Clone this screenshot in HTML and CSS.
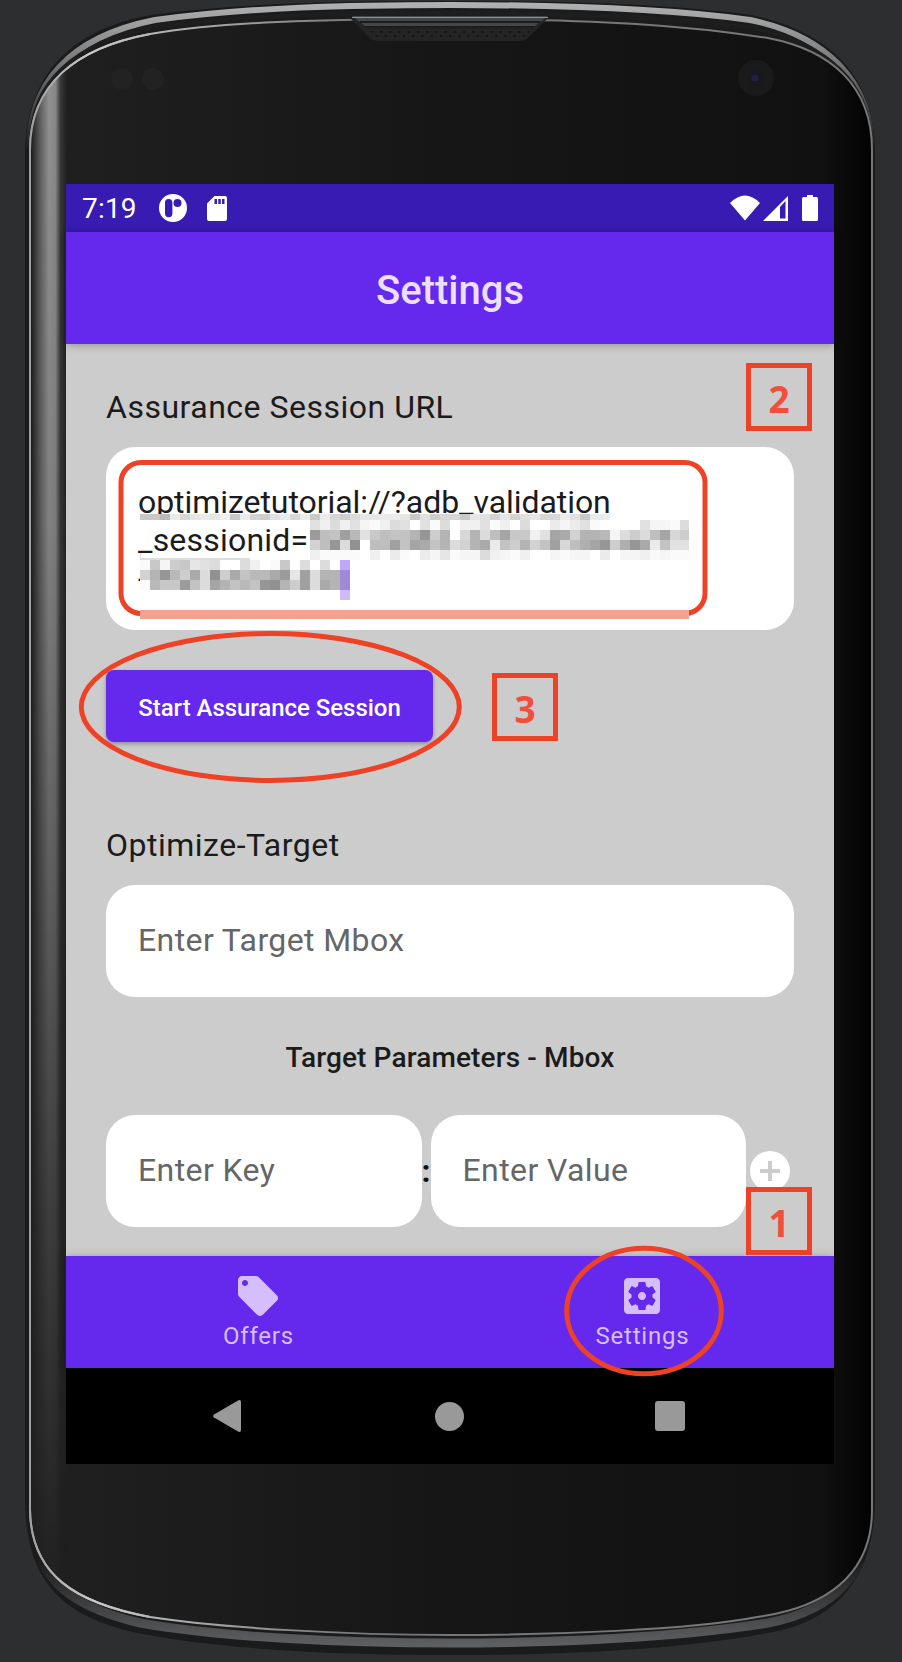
FILE: index.html
```html
<!DOCTYPE html>
<html lang="en">
<head>
<meta charset="utf-8">
<title>Settings</title>
<link rel="stylesheet" href="styles.css">
</head>
<body>
<div class="stage">
  <svg class="frame" width="902" height="1662" viewBox="0 0 902 1662">
    <defs>
      <linearGradient id="face" x1="0" x2="1" y1="0" y2="0">
        <stop offset="0" stop-color="#202020"/><stop offset=".5" stop-color="#161616"/>
        <stop offset=".94" stop-color="#111"/><stop offset="1" stop-color="#020202"/>
      </linearGradient>
      <linearGradient id="glare" x1="0" x2="1" y1="0" y2="0">
        <stop offset="0" stop-color="#1c1c1c"/><stop offset=".25" stop-color="#5e5e5e"/><stop offset=".5" stop-color="#929292"/>
        <stop offset=".68" stop-color="#888"/><stop offset=".82" stop-color="#383838"/><stop offset="1" stop-color="#202020"/>
      </linearGradient>
      <linearGradient id="fade" x1="0" x2="0" y1="0" y2="1">
        <stop offset="0" stop-color="#fff"/><stop offset=".3" stop-color="#ddd"/><stop offset=".75" stop-color="#444"/>
        <stop offset="1" stop-color="#000"/>
      </linearGradient>
      <linearGradient id="rim" gradientUnits="userSpaceOnUse" x1="0" x2="0" y1="0" y2="150">
        <stop offset="0" stop-color="#b4b4b4"/><stop offset=".3" stop-color="#8a8a8a"/><stop offset="1" stop-color="#1b1b1b"/>
      </linearGradient>
      <linearGradient id="rimBottom" gradientUnits="userSpaceOnUse" x1="0" x2="0" y1="1560" y2="1645">
        <stop offset="0" stop-color="#1b1b1b"/><stop offset="1" stop-color="#5e5f61"/>
      </linearGradient>
      <linearGradient id="edge" gradientUnits="userSpaceOnUse" x1="0" x2="902" y1="0" y2="0">
        <stop offset="0" stop-color="#8c8c8c"/><stop offset=".1" stop-color="#c8c8c8"/><stop offset=".4" stop-color="#777"/>
        <stop offset="1" stop-color="#777"/>
      </linearGradient>
      <mask id="glareMask"><rect x="31" y="60" width="36" height="1540" fill="url(#fade)"/></mask>
      <clipPath id="glass"><path d="M30 150C30 85 75 48 150 34C220 22 320 19 450 19C600 19 690 26 768 38C830 50 872 85 872 150V1510C872 1575 825 1608 757 1617C690 1630 550 1635 450 1635C350 1635 220 1628 150 1617C75 1603 31 1575 31 1510Z"/></clipPath>
      <clipPath id="shell"><path d="M25 150C27 85 60 32 150 15C250 2 350 1 451 1C570 1 670 4 751 15C830 32 873 75 875 150V1500C874 1580 835 1620 773 1632C680 1650 560 1655 450 1655C340 1655 220 1650 133 1632C60 1615 26 1580 25 1500Z"/></clipPath>
      <pattern id="mesh" width="9.2" height="8" patternUnits="userSpaceOnUse" x="370" y="30">
        <circle cx="2" cy="2" r="1.1" fill="#101010"/><circle cx="6.6" cy="6" r="1.1" fill="#101010"/>
      </pattern>
    </defs>
    <g clip-path="url(#shell)">
      <rect width="902" height="1662" fill="#1b1b1b"/>
      <path fill="none" stroke="url(#rim)" stroke-width="6" d="M29 150C29 85 68 37 155 20C250 7 350 5 451 5C570 5 670 9 750 20C824 35 872 80 872 150"/>
      <path fill="none" stroke="url(#rimBottom)" stroke-width="9" d="M30 1500C30 1578 68 1606 140 1623C220 1637 340 1643 450 1643C560 1643 680 1637 768 1623C835 1610 872 1573 872 1500"/>
    </g>
    <path fill="none" stroke="#1d1e1f" stroke-width="5" d="M32 140C32 85 72 44 155 27C250 14 350 13 451 13C570 13 670 17 755 28C828 45 869 85 869 140"/>
    <path fill="url(#face)" stroke="url(#edge)" stroke-width="2" d="M30 150C30 85 75 48 150 34C220 22 320 19 450 19C600 19 690 26 768 38C830 50 872 85 872 150V1510C872 1575 825 1608 757 1617C690 1630 550 1635 450 1635C350 1635 220 1628 150 1617C75 1603 31 1575 30 1510Z"/>
    <g clip-path="url(#glass)"><rect x="31" y="60" width="36" height="1540" fill="url(#glare)" mask="url(#glareMask)"/></g>
    <path fill="none" stroke="url(#edge)" stroke-width="2" d="M150 34C75 48 30 85 30 150V1510C31 1575 75 1603 150 1617"/>
    <path fill="#242424" d="M350 18H548L528 38Q525 41 520 41H378Q373 41 370 38Z"/>
    <path fill="#44474a" d="M352 16H548L535 26H365Z"/>
    <path fill="none" stroke="#8c8e90" d="M352 17.500H548"/>
    <path fill="none" stroke="#1c1c1c" stroke-width="2" d="M360 22H540M366 27H534"/>
    <rect x="370" y="30" width="160" height="8" fill="url(#mesh)"/>
    <circle cx="122" cy="79" r="11" fill="#222"/><circle cx="153" cy="79" r="11" fill="#222"/>
    <circle cx="756" cy="78" r="18" fill="#1a1a1b"/><circle cx="756" cy="78" r="8" fill="#181820"/><circle cx="755" cy="78" r="3.500" fill="#232042"/>
  </svg>

  <main class="screen">
    <div class="status">
      <span class="time">7:19</span>
      <svg class="app" width="28" height="28" viewBox="0 0 28 28"><path fill="#fff" fill-rule="evenodd" d="M14 0a14 14 0 1 1 0 28a14 14 0 1 1 0-28ZM9.500 5A3.500 3.500 0 0 0 6 8.500V19.500a3.700 3.700 0 0 0 7.400 0V8.500A3.500 3.500 0 0 0 9.500 5ZM18.500 5a4 4 0 1 0 0 8a4 4 0 1 0 0-8Z"/></svg>
      <svg class="sd" width="20" height="26" viewBox="0 0 20 26"><path fill="#fff" fill-rule="evenodd" d="M7.500 0H18a2 2 0 0 1 2 2V23a2 2 0 0 1-2 2H2a2 2 0 0 1-2-2V7.500ZM7.500 3v5H10V3ZM11.300 3v5h2.500V3ZM15 3v5h2.500V3Z"/></svg>
      <svg class="signals" width="90" height="28" viewBox="0 0 90 28"><path fill="#fff" d="M1 8Q16-7 31 8L16 25.500ZM34 26L59 1V26ZM73 3.500Q73 2 74.500 2H78V0h6V2h3.500Q89 2 89 3.500V24.500Q89 26 87.500 26H74.500Q73 26 73 24.500Z"/><path fill="#381bb2" d="M51 12L56.500 6V23.500H51Z"/></svg>
    </div>
    <header class="appbar">Settings</header>
    <section class="content">
      <div class="label session">Assurance Session URL</div>
      <div class="field url"><div>optimizetutorial://?adb_validation</div><div class="query">_sessionid=</div><div>-</div></div>
      <div class="button">Start Assurance Session</div>
      <div class="label target">Optimize-Target</div>
      <div class="field">Enter Target Mbox</div>
      <h2 class="subhead">Target Parameters - Mbox</h2>
      <div class="pair">
        <div class="field">Enter Key</div>
        <span class="colon">:</span>
        <div class="field">Enter Value</div>
        <svg class="plus" width="40" height="40" viewBox="0 0 40 40"><circle cx="20" cy="20" r="20" fill="#fff"/><path stroke="#ccc" stroke-width="4" d="M10 20H30M20 10V30"/></svg>
      </div>
    </section>
    <nav class="tabs">
      <div class="tab"><svg width="48" height="48" viewBox="0 0 24 24" fill="#d6befc"><path d="M21.410 11.580l-9-9C12.050 2.220 11.550 2 11 2H4c-1.100 0-2 .9-2 2v7c0 .55.22 1.050.59 1.420l9 9c.36.36.86.58 1.410.58s1.050-.22 1.410-.59l7-7c.37-.36.59-.86.59-1.410s-.23-1.060-.59-1.420zM5.500 7C4.670 7 4 6.330 4 5.500S4.670 4 5.500 4 7 4.670 7 5.500 6.330 7 5.500 7z"/></svg><span>Offers</span></div>
      <div class="tab"><svg width="48" height="48" viewBox="0 0 24 24" fill="#d6befc"><path d="M12 10c-1.100 0-2 .9-2 2s.9 2 2 2 2-.9 2-2-.9-2-2-2zm7-7H5c-1.110 0-2 .9-2 2v14c0 1.100.89 2 2 2h14c1.110 0 2-.9 2-2V5c0-1.100-.89-2-2-2zm-1.750 9c0 .23-.02.46-.05.68l1.480 1.160c.13.11.17.3.08.45l-1.400 2.420c-.09.15-.27.21-.43.15l-1.740-.7c-.36.28-.76.51-1.180.69l-.26 1.850c-.03.17-.18.3-.35.3h-2.800c-.17 0-.32-.13-.35-.29l-.26-1.850c-.43-.18-.82-.41-1.180-.69l-1.740.7c-.16.06-.34 0-.43-.15l-1.400-2.420c-.09-.15-.05-.34.08-.45l1.480-1.160c-.03-.23-.05-.46-.05-.69 0-.23.02-.46.05-.68l-1.480-1.160c-.13-.11-.17-.3-.08-.45l1.400-2.420c.09-.15.27-.21.43-.15l1.740.7c.36-.28.76-.51 1.180-.69l.26-1.850c.03-.17.18-.3.35-.3h2.800c.17 0 .32.13.35.29l.26 1.850c.43.18.82.41 1.180.69l1.740-.7c.16-.06.34 0 .43.15l1.400 2.420c.09.15.05.34-.08.45l-1.480 1.160c.03.23.05.46.05.69z"/></svg><span>Settings</span></div>
    </nav>
    <div class="sysnav">
      <svg class="back" width="28" height="32" viewBox="0 0 28 32"><path fill="#999" d="M1 14.500L25 .4Q28-.8 28 2V30Q28 32.800 25 31.600L1 17.500Q-.7 16 1 14.500Z"/></svg>
      <span class="home"></span>
      <span class="recent"></span>
    </div>
  </main>

  <svg class="notes" width="902" height="1662" viewBox="0 0 902 1662" fill="none" stroke="#ee4226" stroke-width="5">
    <rect x="121" y="462.500" width="584" height="151" rx="20"/>
    <g id="mosaic" stroke="none" shape-rendering="crispEdges">
      <path fill="#fff" d="M140 514H689V520H140ZM310 520H689V560H310ZM140 560H340V600H140Z"/>
      <path fill="#ddd" d="M140 553h1v5h109v2H140Z"/>
      <path fill="#c0a8f8" d="M340 560h10v10h-10Z"/><path fill="#a189d9" d="M340 570h10v20h-10Z"/><path fill="#cfbbf9" d="M340 590h10v10h-10Z"/>
      <path fill="#f6a092" d="M140 610H689V619H140Z"/>
    </g>
    <ellipse cx="270.300" cy="707" rx="189" ry="73.500"/>
    <ellipse cx="644" cy="1311" rx="77.300" ry="62.800"/>
  </svg>
  <div class="badge two">2</div>
  <div class="badge three">3</div>
  <div class="badge one">1</div>
</div>
<script src="mosaic.js"></script>
</body>
</html>
```
FILE: mosaic.js
```js
// Each letter is one redaction block: a = darkest grey, z = white.
const rows = [
  [140, 514, 6, 'oolvruvuwovqptvrvovrpsuuvvuotprroutquqturrvtovv'],
  [310, 520, 10, 'twswtxywstztyszwwtywzszzvxvtyzzzztxxys'],
  [310, 530, 10, 'fmngltomnnkepkzrksmhoowthiqkklxspsmhrp'],
  [310, 540, 10, 'qmesdzmmgnhinksqkivnpkqngrmjhepjeivntt'],
  [310, 550, 10, 'wyyyyzwzvyzvxuyxxswxywzzxyxxzvzxxwyxyy'],
  [140, 560, 10, 'yoxpoutszzswzyozszsz'],
  [140, 570, 10, 'qkelpisdpinllifugskk'],
  [140, 580, 10, 'yloofnshknlnedkpgsik'],
];
const group = document.getElementById('mosaic');
for (const [x, y, height, cells] of rows) {
  [...cells].forEach((cell, i) => {
    const grey = 130 + 5 * (cell.charCodeAt(0) - 97);
    const block = document.createElementNS('http://www.w3.org/2000/svg', 'rect');
    const left = x + i * 10;
    block.setAttribute('x', left);
    block.setAttribute('y', y);
    block.setAttribute('width', Math.min(10, 689 - left));
    block.setAttribute('height', height);
    block.setAttribute('fill', `rgb(${grey},${grey},${grey})`);
    group.appendChild(block);
  });
}
```
FILE: styles.css
```css
* { box-sizing: border-box; }
body { margin: 0; background: #2d2e30; font-family: Roboto, "Liberation Sans", sans-serif; }
svg { display: block; }
.stage { position: relative; width: 902px; height: 1662px; padding: 184px 68px 0 66px; overflow: hidden; }
.frame, .notes { position: absolute; left: 0; top: 0; }
.screen { position: relative; width: 768px; height: 1280px; background: #ccc; }

.status { display: flex; height: 48px; padding: 0 15px 0 16px; background: #381bb2; }
.time { width: 77px; font-size: 28px; line-height: 50px; letter-spacing: .2px; color: #fff; }
.app { margin-top: 10px; }
.sd { margin: 12px 0 0 20px; }
.signals { margin: 11px 0 0 auto; }

.appbar { position: relative; height: 112px; padding-top: 3px; background: #6429ed; color: #ebdffd; font-size: 40px; font-weight: 500; line-height: 112px; text-align: center; box-shadow: 0 1px 8px rgba(0,0,0,.3); }

.content { height: 912px; padding: 44px 40px 0; }
.label { font-size: 32px; line-height: 38px; letter-spacing: .5px; color: #1b1b1b; white-space: nowrap; }
.field { height: 112px; padding: 36px 32px 0; border-radius: 29px; background: #fff; color: #666; font-size: 32px; line-height: 38px; letter-spacing: .4px; white-space: nowrap; }
.url { height: 183px; margin-top: 21px; color: #1b1b1b; letter-spacing: -.06px; }
.query { letter-spacing: .2px; }
.button { width: 327px; height: 72px; margin-top: 40px; border-radius: 8px; background: #6429ed; color: #fff; font-size: 24px; font-weight: 500; line-height: 76px; letter-spacing: -.04px; text-align: center; white-space: nowrap; box-shadow: 0 2px 4px rgba(0,0,0,.3); }
.target { margin: 84px 0 21px; }
.subhead { margin: 44px 0 0; font-size: 28px; font-weight: 500; line-height: 34px; letter-spacing: .13px; text-align: center; color: #1b1b1b; }
.pair { display: flex; align-items: center; margin-top: 40px; }
.pair .field { width: 315.5px; }
.colon { width: 9px; font-size: 32px; font-weight: 700; line-height: 38px; color: #111; }
.plus { margin-left: 4px; }

.tabs { position: relative; display: grid; grid-template-columns: 1fr 1fr; height: 112px; background: #6429ed; box-shadow: 0 0 8px rgba(0,0,0,.2); }
.tab { display: flex; flex-direction: column; align-items: center; padding-top: 16px; color: #d6befc; font-size: 24px; line-height: 28px; letter-spacing: .8px; }
.tab span { margin-top: 2px; padding-left: 1px; }

.sysnav { position: relative; display: flex; align-items: center; height: 96px; padding-left: 147px; background: #000; }
.home { width: 29px; height: 29px; margin-left: 194px; border-radius: 50%; background: #999; }
.recent { width: 30px; height: 30px; margin-left: 191px; border-radius: 3px; background: #999; }

.badge { position: absolute; width: 66px; height: 68px; border: 5px solid #ee4226; color: #f04f3e; font: 700 37px/61px "Noto Sans", sans-serif; text-align: center; }
.two { left: 746px; top: 363px; }
.three { left: 492px; top: 673px; }
.one { left: 746px; top: 1187px; background: #ccc; }
```
